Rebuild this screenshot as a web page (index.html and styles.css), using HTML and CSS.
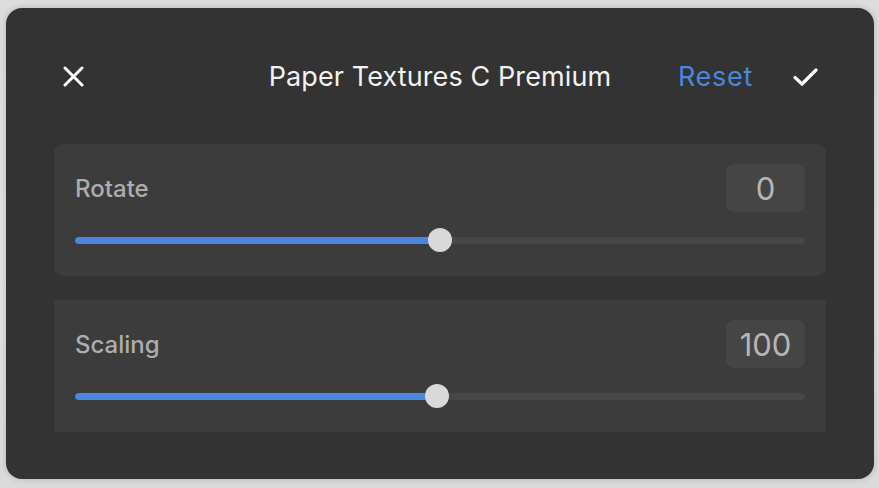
FILE: index.html
```html
<!DOCTYPE html>
<html>
<head>
<meta charset="utf-8">
<link rel="stylesheet" href="styles.css">
</head>
<body>
<div class="panel">
  <div class="header">
    <div class="hleft">
      <svg class="icon-x" width="21" height="21" viewBox="0 0 21 21"><path d="M2 2L19 19M19 2L2 19" stroke="#ffffff" stroke-width="3" stroke-linecap="round" fill="none"/></svg>
    </div>
    <div class="title">Paper Textures C Premium</div>
    <div class="hright">
      <span class="reset">Reset</span>
      <svg class="icon-check" width="25" height="18" viewBox="0 0 25 18"><path d="M2 9.5L9 16L23 2" stroke="#ffffff" stroke-width="3.2" stroke-linecap="round" stroke-linejoin="round" fill="none"/></svg>
    </div>
  </div>
  <div class="card">
    <div class="row">
      <span class="label">Rotate</span>
      <span class="value">0</span>
    </div>
    <div class="slider">
      <div class="track"><div class="fill" style="width:50%"></div></div>
      <div class="thumb" style="left:50%"></div>
    </div>
  </div>
  <div class="card square">
    <div class="row">
      <span class="label">Scaling</span>
      <span class="value">100</span>
    </div>
    <div class="slider">
      <div class="track"><div class="fill" style="width:49.6%"></div></div>
      <div class="thumb" style="left:49.6%"></div>
    </div>
  </div>
</div>
</body>
</html>
```

FILE: styles.css
```css
html, body {
  margin: 0;
  padding: 0;
}
body {
  width: 879px;
  height: 488px;
  background: linear-gradient(180deg, #dcdcdc 0%, #e2e2e2 60%, #dadada 100%);
  font-family: Inter, "Noto Sans", sans-serif;
  overflow: hidden;
}
.panel {
  box-sizing: border-box;
  margin: 8px 0 0 6px;
  width: 868px;
  height: 471px;
  background: #333333;
  border-radius: 16px;
  box-shadow: 0 0 6px rgba(0, 0, 0, 0.18);
  padding: 40px 48px 0 48px;
  display: flex;
  flex-direction: column;
}
.header {
  height: 56px;
  display: grid;
  grid-template-columns: 1fr auto 1fr;
  align-items: center;
  margin-bottom: 40px;
}
.hleft {
  display: flex;
  align-items: center;
  padding-left: 9px;
}
.icon-x {
  display: block;
}
.title {
  color: #f2f2f2;
  font-size: 27px;
  font-weight: 400;
  letter-spacing: 0.1px;
}
.hright {
  display: flex;
  align-items: center;
  justify-content: flex-end;
  padding-right: 8px;
  gap: 40px;
}
.reset {
  color: #4b87dd;
  font-size: 27px;
  letter-spacing: 0.7px;
}
.icon-check {
  display: block;
  margin-top: 1px;
}
.card {
  background: #3c3c3c;
  border-radius: 9px;
  padding: 20px 21px 24px 21px;
  margin-bottom: 24px;
}
.card.square {
  border-radius: 0;
}
.row {
  display: flex;
  align-items: center;
  justify-content: space-between;
  height: 48px;
}
.label {
  color: #adadad;
  font-size: 24px;
  font-weight: 500;
}
.value {
  box-sizing: border-box;
  width: 79px;
  height: 48px;
  border-radius: 8px;
  background: #454545;
  color: #b6b6b6;
  font-size: 31px;
  display: flex;
  align-items: center;
  justify-content: center;
}
.slider {
  position: relative;
  height: 24px;
  margin-top: 16px;
  display: flex;
  align-items: center;
}
.track {
  width: 100%;
  height: 7px;
  border-radius: 4px;
  background: #474747;
  overflow: hidden;
}
.fill {
  height: 100%;
  background: #4b87e0;
  border-radius: 4px;
}
.thumb {
  position: absolute;
  top: 0;
  width: 24px;
  height: 24px;
  margin-left: -12px;
  border-radius: 50%;
  background: #d9d9d9;
}
```
